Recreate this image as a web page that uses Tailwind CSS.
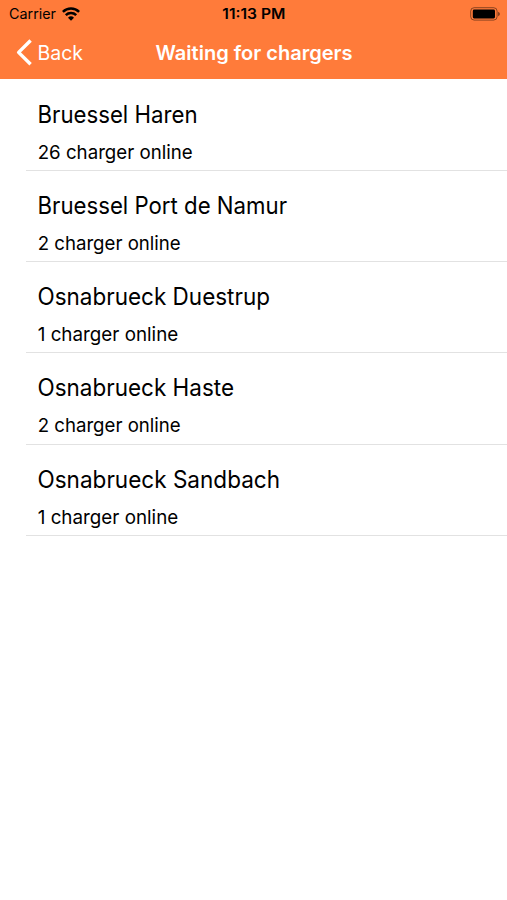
<!DOCTYPE html>
<html lang="en">
<head>
<meta charset="utf-8">
<title>Waiting for chargers</title>
<script src="https://cdn.jsdelivr.net/npm/@tailwindcss/browser@4"></script>
</head>
<body class="bg-white text-black font-['Inter',sans-serif] h-[900px] overflow-hidden">
<header class="h-[79px] bg-[#ff7b3a]">
  <div class="grid grid-cols-3 h-[27px] items-center pl-[9px] pr-[7px] text-[14px] leading-[27px]">
    <div class="flex items-center gap-[6px]">
      <svg width="47" height="20" class="overflow-visible"><text x="0" y="15" textLength="47" lengthAdjust="spacingAndGlyphs">Carrier</text></svg>
      <svg width="18" height="14" viewBox="0 0 18 14" fill="none" stroke="#000" stroke-width="2.5"><path d="M.9 4.9a11.6 11.6 0 0 1 16.2 0M3.8 8.1a7.4 7.4 0 0 1 10.4 0"/><path d="M9 13.8 6 10.8a4.3 4.3 0 0 1 6 0z" fill="#000" stroke="none"/></svg>
    </div>
    <svg width="63" height="20" class="overflow-visible justify-self-center font-semibold"><text x="-.7" y="15" textLength="63" lengthAdjust="spacingAndGlyphs">11:13 PM</text></svg>
    <svg width="30" height="14" viewBox="0 0 30 14" class="justify-self-end"><rect x=".7" y=".7" width="26.4" height="12.4" rx="3.5" fill="none" stroke="#000" stroke-opacity=".45"/><rect x="2.8" y="2.5" width="22.2" height="9" rx="1.4"/><path d="M28 4.7q2 .8 2 2.3t-2 2.3z" fill-opacity=".45"/></svg>
  </div>
  <nav class="flex h-[51px] items-center pl-[16px] text-white text-[20px]">
    <svg width="16" height="27" viewBox="0 0 16 27" fill="none" stroke="#fff" stroke-width="3.4" stroke-linejoin="round"><path d="M14.6 1.5 2.6 13.4l12 11.9"/></svg>
    <svg width="46" height="28" class="ml-[6px] overflow-visible"><text x="-.5" y="21" fill="#fff" textLength="45.5" lengthAdjust="spacingAndGlyphs">Back</text></svg>
    <svg width="198" height="28" class="ml-[71px] overflow-visible font-semibold"><text x="0.5" y="21" fill="#fff" textLength="197" lengthAdjust="spacingAndGlyphs">Waiting for chargers</text></svg>
  </nav>
</header>
<main id="list" class="pt-[0.5px]"></main>
<script>
const rows = [["Bruessel Haren",160,"26 charger online",155],["Bruessel Port de Namur",249.5,"2 charger online",143],["Osnabrueck Duestrup",232.5,"1 charger online",140.5],["Osnabrueck Haste",196.5,"2 charger online",143],["Osnabrueck Sandbach",242.5,"1 charger online",140.5]];
document.getElementById("list").innerHTML = rows.map(([a,w,b,v]) => `<section class="ml-[26px] h-[91.3px] border-b border-[#e2e2e2] pl-[12px] pt-[19px]"><svg width="300" height="36" class="block text-[24px]"><text x="-.5" y="24" textLength="${w}" lengthAdjust="spacingAndGlyphs">${a}</text></svg><svg width="300" height="30" class="block text-[19px]"><text x="-.3" y="24.3" textLength="${v}" lengthAdjust="spacingAndGlyphs">${b}</text></svg></section>`).join("");
</script>
</body>
</html>
